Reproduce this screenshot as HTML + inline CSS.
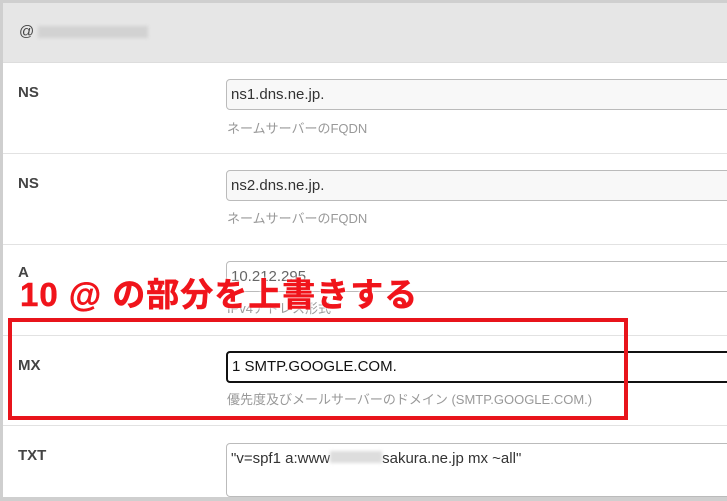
<!DOCTYPE html>
<html style="overflow:hidden;height:501px"><head><meta charset="utf-8"><style>
body{margin:0;width:727px;height:501px;overflow:hidden;background:#cfcfcf;font-family:"Liberation Sans","Noto Sans CJK JP",sans-serif;position:relative}
.pg{position:absolute;left:3px;top:3px;right:0;bottom:4px;background:#fff;overflow:hidden}
.hd{position:absolute;left:3px;top:3px;right:0;height:59px;background:#e6e6e6;border-bottom:1px solid #ddd}
.hd span.t{position:absolute;left:16px;top:20px;font-size:15px;color:#444;white-space:nowrap}
.blur{display:inline-block;width:110px;height:12px;background:#d2d2d2;vertical-align:middle;margin-left:4px;filter:blur(1.5px)}
.sep{position:absolute;left:3px;right:0;height:1px;background:#e2e2e2}
.lb{position:absolute;left:18px;font-size:15px;font-weight:bold;color:#444}
.in{position:absolute;left:226px;width:510px;height:29px;border:1px solid #bbb;border-radius:4px;background:#f8f8f8;font-size:15px;color:#333;line-height:29px;padding-left:4px;box-sizing:content-box;white-space:nowrap;overflow:hidden}
.hp{position:absolute;left:227px;font-size:13px;color:#999;white-space:nowrap}
.bot{position:absolute;left:0;right:0;top:497px;height:4px;background:#cfcfcf}
</style></head><body>
<div class="pg"></div>
<div class="hd"><span class="t">@<span class="blur"></span></span></div>
<div class="lb" style="top:84px">NS</div>
<div class="in" style="top:79px">ns1.dns.ne.jp.</div>
<div class="hp" style="top:118px">ネームサーバーのFQDN</div>
<div class="sep" style="top:153px"></div>
<div class="lb" style="top:175px">NS</div>
<div class="in" style="top:170px">ns2.dns.ne.jp.</div>
<div class="hp" style="top:208px">ネームサーバーのFQDN</div>
<div class="sep" style="top:244px"></div>
<div class="lb" style="top:264px">A</div>
<div class="in" style="top:261px;background:#fff;color:#666">10.212.295.</div>
<div class="hp" style="top:298px">IPv4アドレス形式</div>
<div class="sep" style="top:335px"></div>
<div class="lb" style="top:357px">MX</div>
<div class="in" style="top:351px;border:2px solid #111;background:#fff;height:28px;line-height:28px;color:#111">1 SMTP.GOOGLE.COM.</div>
<div class="hp" style="top:389px">優先度及びメールサーバーのドメイン (SMTP.GOOGLE.COM.)</div>
<div class="sep" style="top:425px"></div>
<div class="lb" style="top:447px">TXT</div>
<div class="in" style="top:443px;height:52px;background:#fff;line-height:29px">"v=spf1 a:www<span style="display:inline-block;width:52px;height:12px;background:#ddd;filter:blur(1.5px)"></span>sakura.ne.jp mx ~all"</div>
<div class="bot"></div>
<div style="position:absolute;left:8px;top:318px;width:612px;height:94px;border:4px solid #e8141b"></div>
<div style="position:absolute;left:20px;top:268px;font-size:33px;font-weight:bold;color:#f0141b;-webkit-text-stroke:0.5px #f0141b;text-shadow:0 0 3px #fff,0 0 3px #fff;letter-spacing:1px;white-space:nowrap">10 @ の部分を上書きする</div>
</body></html>
